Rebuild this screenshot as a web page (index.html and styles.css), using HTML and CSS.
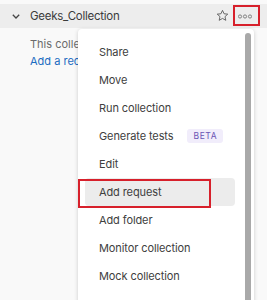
FILE: index.html
```html
<!DOCTYPE html>
<html lang="en">

<head>
    <meta charset="UTF-8">
    <title>Geeks_Collection</title>
    <link rel="stylesheet" href="styles.css">
</head>

<body>
    <div class="sidebar">
        <div class="collection-row">
            <svg class="chevron" width="8" height="5" viewBox="0 0 8 5">
                <path d="M0.8 0.8 L4 4 L7.2 0.8" fill="none" stroke="#444" stroke-width="1.3" />
            </svg>
            <span class="collection-name">Geeks_Collection</span>
            <svg class="star" width="13" height="13" viewBox="0 0 24 24">
                <path d="M12 2.5l2.9 6.3 6.8.7-5.1 4.6 1.5 6.8L12 17.4l-6.1 3.5 1.5-6.8-5.1-4.6 6.8-.7z"
                    fill="none" stroke="#555" stroke-width="1.6" stroke-linejoin="round" />
            </svg>
            <span class="more-btn">
                <svg width="14" height="5" viewBox="0 0 14 5">
                    <circle cx="2" cy="2.5" r="1.6" fill="none" stroke="#777" stroke-width="0.9" />
                    <circle cx="7" cy="2.5" r="1.6" fill="none" stroke="#777" stroke-width="0.9" />
                    <circle cx="12" cy="2.5" r="1.6" fill="none" stroke="#777" stroke-width="0.9" />
                </svg>
            </span>
        </div>
        <div class="collection-body">
            <p class="empty-text">This collection is empty.</p>
            <a class="add-link" href="#">Add a request</a>
        </div>
    </div>

    <div class="menu">
        <ul class="menu-list">
            <li class="menu-item">Share</li>
            <li class="menu-item">Move</li>
            <li class="menu-item">Run collection</li>
            <li class="menu-item">Generate tests <span class="badge">BETA</span></li>
            <li class="menu-item">Edit</li>
            <li class="menu-item active">Add request</li>
            <li class="menu-item">Add folder</li>
            <li class="menu-item">Monitor collection</li>
            <li class="menu-item">Mock collection</li>
        </ul>
        <div class="scroll-thumb"></div>
    </div>

    <div class="mark mark-more"></div>
    <div class="mark mark-request"></div>
</body>

</html>
```

FILE: styles.css
```css
html,
body {
    height: 100%;
    margin: 0;
    padding: 0;
}

body {
    font-family: 'Inter', 'Liberation Sans', Arial, sans-serif;
    background: #f9f9f9;
    overflow: hidden;
    position: relative;
}

.sidebar {
    padding-top: 4px;
}

.collection-row {
    height: 24px;
    background: #ededed;
    display: flex;
    align-items: center;
    padding: 0 11px 0 12px;
}

.chevron {
    margin-right: 10px;
    margin-top: 1px;
}

.collection-name {
    flex: 1;
    font-size: 11.5px;
    letter-spacing: -0.25px;
    color: #3b3b3b;
}

.star {
    margin-right: 9px;
    margin-top: -2px;
}

.more-btn {
    display: flex;
    align-items: center;
    width: 18px;
}

.collection-body {
    padding: 9px 0 0 30px;
    font-size: 11px;
}

.empty-text {
    margin: 0 0 3px 0;
    color: #6b6b6b;
}

.add-link {
    color: #1c6cc1;
    text-decoration: none;
}

.menu {
    position: absolute;
    left: 78px;
    top: 29px;
    width: 176px;
    height: 290px;
    background: #fff;
    border-radius: 4px;
    box-shadow: 0 1px 4px rgba(0, 0, 0, 0.18);
}

.menu-list {
    list-style: none;
    margin: 0;
    padding: 9px 19px 0 7px;
}

.menu-item {
    height: 28px;
    display: flex;
    align-items: center;
    padding-left: 14px;
    font-size: 11px;
    letter-spacing: -0.1px;
    color: #404040;
    white-space: nowrap;
    border-radius: 4px;
}

.menu-item.active {
    background: #ececec;
}

.badge {
    margin-left: 14px;
    padding: 2px 6px;
    background: #f1edfb;
    color: #6b55b5;
    font-size: 8.5px;
    letter-spacing: 0.6px;
    border-radius: 3px;
}

.scroll-thumb {
    position: absolute;
    right: 3px;
    top: 4px;
    bottom: 0;
    width: 6px;
    background: #a9a9a9;
    border-radius: 3px 3px 0 0;
}

.mark {
    position: absolute;
    border: 2.5px solid #d7202b;
}

.mark-more {
    left: 233px;
    top: 5px;
    width: 23px;
    height: 17px;
}

.mark-request {
    left: 78px;
    top: 179px;
    width: 129px;
    height: 25px;
}
```
